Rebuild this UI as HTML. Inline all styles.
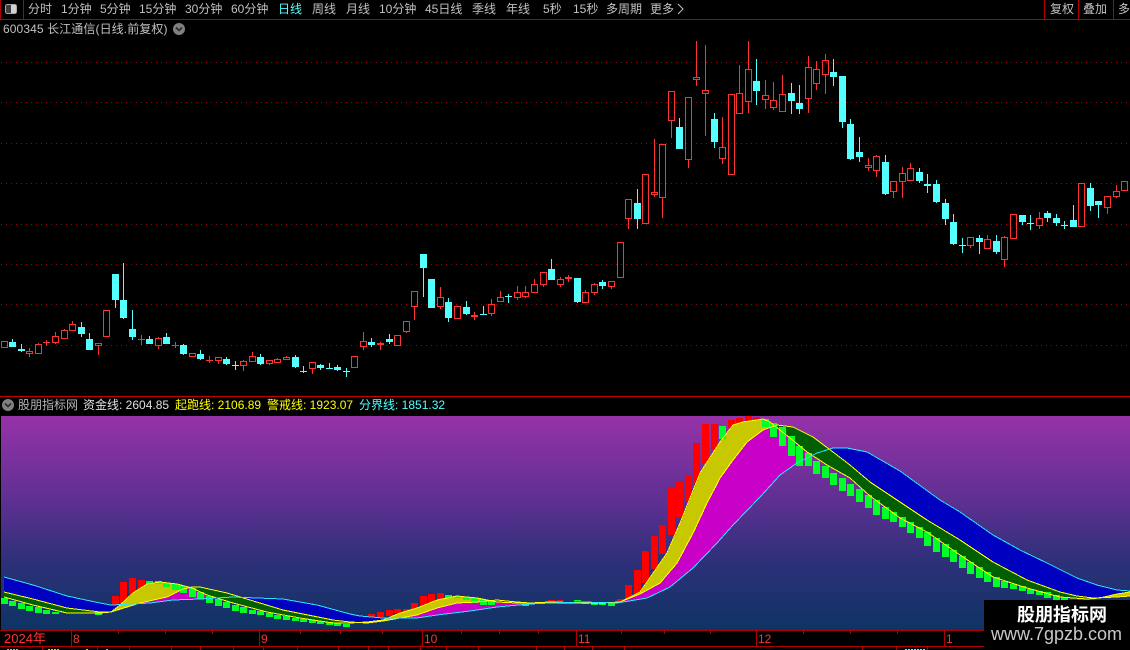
<!DOCTYPE html>
<html lang="zh">
<head>
<meta charset="utf-8">
<title>600345</title>
<style>
html,body{margin:0;padding:0;background:#000;width:1130px;height:650px;overflow:hidden}
#p{position:relative;width:1130px;height:650px;overflow:hidden;background:#000;font:12px/14px "Liberation Sans","WenQuanYi Zen Hei","Noto Sans CJK SC",sans-serif;color:#c0c0c0}
#p span{position:absolute;white-space:nowrap}
svg{position:absolute;left:0;top:0}
.t{top:2px;font-size:12px;line-height:14px}
.a{top:632px;color:#ff3232;font-size:12px;line-height:14px}
</style>
</head>
<body>
<div id="p">
<svg id="s" width="1130" height="650" viewBox="0 0 1130 650" shape-rendering="crispEdges"></svg>
<span class="t" style="left:28px">分时</span>
<span class="t" style="left:61px">1分钟</span>
<span class="t" style="left:100px">5分钟</span>
<span class="t" style="left:139px">15分钟</span>
<span class="t" style="left:185px">30分钟</span>
<span class="t" style="left:231px">60分钟</span>
<span class="t" style="left:278px;color:#54ffff">日线</span>
<span class="t" style="left:312px">周线</span>
<span class="t" style="left:346px">月线</span>
<span class="t" style="left:379px">10分钟</span>
<span class="t" style="left:425px">45日线</span>
<span class="t" style="left:472px">季线</span>
<span class="t" style="left:506px">年线</span>
<span class="t" style="left:543px">5秒</span>
<span class="t" style="left:573px">15秒</span>
<span class="t" style="left:606px">多周期</span>
<span class="t" style="left:650px">更多</span>
<span class="t" style="left:1050px">复权</span>
<span class="t" style="left:1083px">叠加</span>
<span class="t" style="left:1118px">多</span>
<span style="left:3px;top:22px;letter-spacing:.1px">600345 长江通信(日线.前复权)</span>
<span style="left:18px;top:398px;color:#b4b4b4">股朋指标网</span>
<span style="left:83px;top:398px;color:#e0e0e0">资金线: 2604.85</span>
<span style="left:175px;top:398px;color:#ffff00">起跑线: 2106.89</span>
<span style="left:267px;top:398px;color:#ffff00">警戒线: 1923.07</span>
<span style="left:359px;top:398px;color:#54ffff">分界线: 1851.32</span>
<span class="a" style="left:4px;font-size:13px">2024年</span>
<span class="a" style="left:73px">8</span>
<span class="a" style="left:261px">9</span>
<span class="a" style="left:424px">10</span>
<span class="a" style="left:578px">11</span>
<span class="a" style="left:758px">12</span>
<span class="a" style="left:946px">1</span>
<div style="position:absolute;left:984px;top:600px;width:146px;height:50px;background:#000"></div>
<span style="left:1017px;top:604px;font-size:18px;line-height:22px;font-weight:bold;color:#fff">股朋指标网</span>
<span style="left:991px;top:624px;font-size:18px;line-height:20px;color:#c8c8c8">www.7gpzb.com</span>
</div>
<script>
(function(){
var s=document.getElementById('s'),h='';
function R(x,y,w,ht,c){if(ht<=0)return;h+='<rect x="'+x+'" y="'+y+'" width="'+w+'" height="'+ht+'" fill="'+c+'"/>';}
var RED='#ff3232',CY='#54ffff',LN='#b00000';
/* top bar */
R(0,19,1130,1,LN);R(23,0,1,19,LN);R(1044,0,1,19,LN);R(1078,0,1,19,LN);R(1113,0,1,19,LN);R(0,0,1,19,LN);
h+='<rect x="5.5" y="4.5" width="11" height="9" rx="2" fill="#3c3c3c" stroke="#aaa" stroke-width="1"/>';
R(11,5,5,8,'#d0d0d0');
h+='<path d="M678 4l5 5-5 5" fill="none" stroke="#c0c0c0" shape-rendering="auto"/>';
/* grid */
[62,102,143,183,224,264,304,345].forEach(function(y){
 for(var x=1;x<1130;x+=5)R(x,y,1,1,'#9c0000');
});
/* candles: type,top,bottom,high,low */
var D=[
[1,341,348,341,348],[0,342,347,339,347],[0,349,351,344,352],[1,351,354,348,357],[1,344,354,343,354],[1,342,343,340,346],[1,336,343,332,344],[1,330,339,329,339],[1,324,331,321,331],[0,327,334,322,337],
[0,339,350,333,350],[1,343,346,343,355],[1,310,337,310,337],[0,274,300,274,308],[0,300,318,263,319],[0,329,337,310,340],[1,339,340,335,345],[0,339,344,336,344],[1,338,346,337,349],[0,337,344,333,344],
[1,345,346,342,348],[0,345,354,344,355],[1,353,357,353,357],[0,354,359,350,360],[1,360,361,356,363],[1,357,361,357,364],[0,359,364,357,365],[0,365,366,361,370],[1,361,366,360,371],[1,356,362,352,362],
[0,357,364,354,365],[1,360,364,360,365],[1,359,363,358,363],[1,357,360,356,360],[0,357,367,355,368],[0,371,372,366,373],[1,362,369,362,374],[0,365,368,364,370],[0,368,369,363,369],[0,367,370,365,371],
[0,371,372,368,377],[1,356,368,356,368],[1,341,347,332,350],[0,342,345,338,347],[1,343,345,342,350],[0,339,342,334,344],[1,335,346,335,346],[1,321,332,321,333],[1,291,307,291,320],[0,254,268,254,297],
[0,279,308,279,308],[1,297,307,287,309],[0,302,318,298,322],[1,306,319,306,319],[0,307,314,301,315],[2,315,317,312,320],[0,314,315,306,315],[1,304,314,299,316],[1,297,302,291,302],[0,296,297,294,303],
[1,292,298,286,300],[1,292,297,286,298],[1,284,293,279,293],[1,272,285,272,287],[0,269,280,259,280],[1,279,285,277,287],[2,277,279,275,282],[0,278,302,278,303],[1,292,303,290,303],[1,284,293,283,295],
[0,282,286,280,289],[1,281,287,281,289],[1,242,278,242,278],[1,199,219,199,229],[0,203,219,189,229],[1,174,224,174,224],[1,192,195,139,197],[1,144,198,144,218],[1,91,121,91,138],[0,127,149,118,149],
[1,97,160,97,168],[1,77,80,41,86],[1,90,94,45,136],[0,119,142,113,148],[1,147,159,117,164],[1,94,175,94,175],[1,93,114,65,114],[1,69,102,41,113],[0,81,91,59,105],[1,95,100,80,109],
[1,100,108,82,110],[1,94,112,75,112],[0,93,101,83,114],[0,103,109,85,114],[1,67,99,56,113],[1,69,84,61,90],[1,60,75,54,94],[0,72,77,59,86],[0,76,122,76,128],[0,124,159,119,160],
[0,152,157,137,162],[1,165,168,158,171],[1,156,171,155,177],[0,162,194,155,195],[1,181,192,181,198],[1,173,182,167,198],[1,168,181,163,181],[0,172,181,168,183],[0,184,186,174,193],[0,184,202,180,203],
[0,203,219,199,225],[0,222,244,214,245],[0,245,246,238,253],[1,237,246,237,248],[0,238,242,235,254],[1,239,249,235,249],[0,241,252,235,254],[1,237,260,236,267],[1,214,239,214,239],[0,215,222,215,225],
[0,223,224,215,230],[1,218,226,212,229],[0,213,218,211,222],[0,218,223,214,226],[0,225,226,221,229],[0,220,227,205,227],[1,183,227,183,227],[0,188,206,183,211],[0,201,205,201,218],[1,196,208,196,214],
[1,191,197,185,198],[1,181,191,181,191]];
function X(i){return Math.floor(1.2+i*8.553);}
D.forEach(function(d,i){
 var x=X(i),t=d[0],c=(t==0)?CY:RED,cx=x+3;
 R(cx,d[3],1,d[1]-d[3],c);R(cx,d[2],1,d[4]-d[2],c);
 if(t==1&&d[2]-d[1]>2){
  R(x,d[1],7,1,c);R(x,d[2]-1,7,1,c);R(x,d[1],1,d[2]-d[1],c);R(x+6,d[1],1,d[2]-d[1],c);
 }else R(x,d[1],7,d[2]-d[1],c);
});
/* lower panel */
R(0,396,1130,1,'#c00000');
h+='<defs><linearGradient id="g" x1="0" y1="0" x2="0" y2="1"><stop offset="0" stop-color="#9632a8"/><stop offset=".4" stop-color="#5e3092"/><stop offset=".67" stop-color="#2f307a"/><stop offset="1" stop-color="#0e3464"/></linearGradient></defs>';
h+='<rect x="1" y="416" width="1129" height="214" fill="url(#g)"/>';
var A=[[4,597],[33,605],[67,613],[100,613],[111,612],[120,605],[133,593],[147,584],[160,582],[177,584],[192,588],[207,595],[233,603],[267,612],[300,618],[333,623],[350,623],[367,622],[383,620],[400,613],[417,608],[437,600],[457,596],[477,598],[497,602],[517,603],[530,603],[550,602],[600,603],[620,602],[640,592],[667,553],[680,523],[700,473],[720,442],[733,425],[743,422],[763,419],[770,422],[790,438],[807,452],[827,465],[850,478],[870,496],[900,518],[927,532],[960,555],[993,577],[1027,588],[1060,597],[1087,599],[1100,598],[1117,594],[1130,592]];
var B=[[4,592],[33,599],[67,608],[100,612],[111,612],[127,607],[140,603],[167,597],[183,589],[192,587],[200,587],[227,593],[250,600],[283,610],[333,620],[350,622],[367,623],[383,621],[400,618],[417,615],[437,608],[457,603],[477,602],[497,600],[517,602],[530,603],[550,603],[600,603],[620,602],[640,594],[660,583],[677,563],[693,533],[707,503],[720,478],[733,460],[747,442],[763,430],[777,425],[793,427],[813,437],[833,452],[850,465],[870,482],[897,500],[927,520],[960,540],[993,562],[1027,580],[1060,592],[1077,596],[1093,598],[1117,597],[1130,596]];
var C=[[4,577],[33,585],[67,596],[100,603],[111,605],[133,604],[150,603],[173,600],[200,599],[233,597],[257,598],[283,599],[317,605],[350,614],[360,616],[383,618],[417,618],[437,615],[470,611],[497,607],[530,604],[550,603],[583,602],[617,603],[647,598],[670,587],[693,568],[717,543],[733,525],[760,497],[780,475],[797,463],[817,453],[833,448],[847,448],[867,452],[900,471],[940,500],[960,512],[993,535],[1020,550],[1047,563],[1077,578],[1097,585],[1117,590],[1130,591]];
function I(P,x){for(var k=1;k<P.length;k++){if(x<=P[k][0]){var a=P[k-1],b=P[k];return a[1]+(b[1]-a[1])*(x-a[0])/(b[0]-a[0]);}}return P[P.length-1][1];}
/* bars: [index,top,bottom] */
var RB=[[13,596,610],[14,582,603],[15,578,597],[16,580,592],[42,617,622],[43,614,620],[44,612,617],[45,610,616],[46,609,613],[47,609,612],[48,603,610],[49,596,606],[50,594,603],[51,593,600],[63,602,603],[64,600,602],[65,600,601],[72,599,602],[73,585,600],[74,570,594],[75,551,583],[76,536,569],[77,525,554],[78,488,535],[79,481,517],[80,475,502],[81,443,483],[82,424,463],[83,424,450],[85,420,428],[86,418,423],[87,416,421],[88,417,420],[126,598,600],[127,596,600],[128,594,598],[129,593,597],[130,591,595],[131,592,597]];
var GB=[[0,598,604],[1,601,606],[2,603,609],[3,606,611],[4,607,613],[5,610,614],[6,612,614],[11,612,615],[17,581,584],[18,581,584],[19,583,587],[20,584,590],[21,586,593],[22,588,597],[23,592,599],[24,596,603],[25,599,606],[26,602,608],[27,605,611],[28,607,613],[29,610,614],[30,611,615],[31,613,617],[32,615,619],[33,616,620],[34,618,621],[35,619,622],[36,620,623],[37,621,624],[38,622,625],[39,623,626],[40,624,627],[52,595,598],[53,596,598],[54,597,600],[55,598,603],[56,600,605],[57,601,605],[61,604,606],[67,600,601],[68,602,604],[69,602,605],[70,602,605],[71,603,606],[84,426,439],[89,419,427],[90,423,437],[91,427,446],[92,436,456],[93,446,466],[94,453,466],[95,461,474],[96,466,478],[97,473,485],[98,478,491],[99,484,496],[100,489,502],[101,495,508],[102,500,515],[103,507,519],[104,512,522],[105,517,527],[106,522,533],[107,527,538],[108,532,546],[109,538,552],[110,544,557],[111,550,562],[112,556,568],[113,562,574],[114,567,578],[115,572,582],[116,577,587],[117,581,588],[118,584,589],[119,586,591],[120,589,594],[121,591,595],[122,592,598],[123,595,600],[124,597,600]];
RB.forEach(function(b){R(X(b[0]),b[1],7,b[2]-b[1],'#ff0000');});
for(var px=4;px<1130;px++){
 var ya=Math.round(I(A,px)),yb=Math.round(I(B,px)),yc=Math.round(I(C,px)),up=Math.min(ya,yb),dn=Math.max(ya,yb);
 if(yc>dn)R(px,dn,1,yc-dn,'#c800c8');
 if(yc<up)R(px,yc,1,up-yc,'#0000c0');
 if(ya<yb)R(px,ya,1,yb-ya,'#c8c800');else if(yb<ya)R(px,yb,1,ya-yb,'#005f00');
}
GB.forEach(function(b){R(X(b[0]),b[1],7,b[2]-b[1],'#00ff28');});
function PL(P,c){h+='<polyline points="'+P.map(function(p){return p[0]+','+p[1];}).join(' ')+'" fill="none" stroke="'+c+'" stroke-width="1"/>';}
PL(A,'#ffff00');PL(B,'#ffff00');PL(C,'#28e6ff');
/* axis */
R(0,630,1130,1,LN);R(0,646,1130,1,LN);
[71,259,422,576,756,944].forEach(function(v){R(v,630,1,16,LN);});
[118,165,212,300,340,382,461,499,538,621,664,710,803,850,897].forEach(function(v){R(v,631,1,3,LN);});
[42,97,129,171,200,233,263,297,338,368,388,420,446,478,536,564,592,624,862,896,927].forEach(function(v){R(v,647,1,3,LN);});
function DS(x0,x1,c){for(var q=x0;q<x1;q+=3)R(q,649,2,1,c);}
DS(7,19,'#b0b0b0');DS(48,60,'#d8d800');DS(86,89,'#d8d800');DS(106,109,'#b0b0b0');DS(905,925,'#54ffff');
/* chevrons */
function CH(cx,cy){h+='<g shape-rendering="auto"><circle cx="'+cx+'" cy="'+cy+'" r="6" fill="#808080"/><path d="M'+(cx-3)+' '+(cy-1.5)+'l3 3 3-3" fill="none" stroke="#2a2a2a" stroke-width="1.6"/></g>';}
CH(179,29);CH(8,405);
s.innerHTML=h;
})();
</script>
</body>
</html>
